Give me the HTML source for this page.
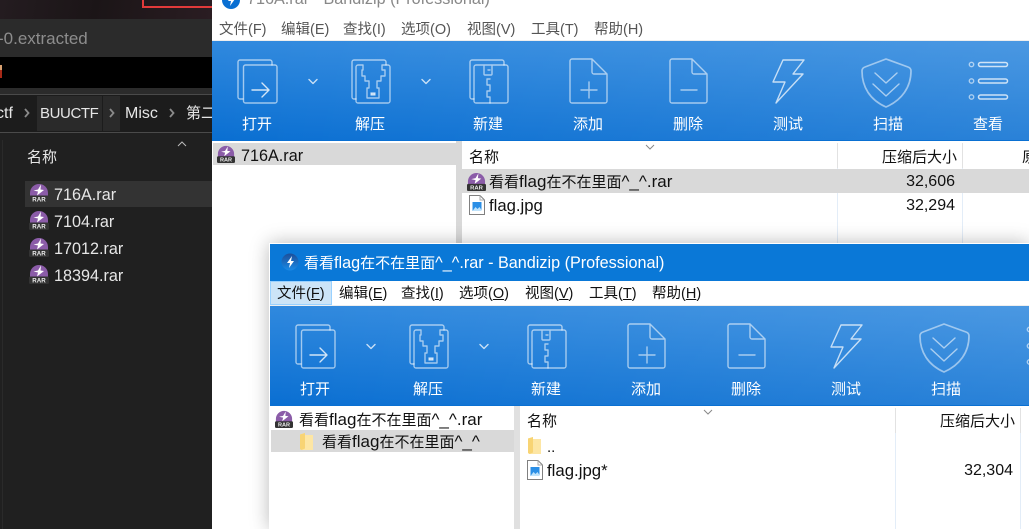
<!DOCTYPE html>
<html lang="zh"><head><meta charset="utf-8"><title>Bandizip</title>
<style>
html,body{margin:0;padding:0;width:1029px;height:529px;overflow:hidden;background:#202020}
body{position:relative;font-family:"Liberation Sans","Noto Sans CJK SC",sans-serif;font-size:15px;color:#111}
.b{position:absolute;display:block}
.c{position:absolute;overflow:hidden}
.t{position:absolute;white-space:nowrap;line-height:20px;height:20px}
.d{color:#e6e6e6}
.m{font-size:14.500px;color:#555}
.f{font-size:14.500px;color:#111}
.w{color:#fff;width:60px;text-align:center}
.r{text-align:right}
.n{font-size:16px}
.l{font-size:16.200px}
.x{font-size:17px}
u{text-underline-offset:1px}
svg{position:absolute;overflow:visible}
.tb{background:linear-gradient(90deg,rgba(255,255,255,0),rgba(255,255,255,.13)),linear-gradient(180deg,#3089de,#0a6fd2)}
</style></head><body>
<svg width="0" height="0" style="position:absolute">
<defs>
<symbol id="rar" viewBox="0 0 20 20" overflow="visible">
<path d="M1 14V10a9 9 0 0 1 18 0v4z" fill="#8b5ca8"/>
<path d="M12 1.500L9 6.500 4.500 7.500l4.500 1-1 4 7-5.500-3.500-.5z" fill="#fff"/>
<rect x="0" y="12.500" width="20" height="7.500" rx="1.500" fill="#333"/>
<text x="10" y="18.600" font-size="6.200" font-weight="700" fill="#eee" text-anchor="middle" font-family="Liberation Sans">RAR</text>
</symbol>
<symbol id="jpg" viewBox="0 0 16 20" overflow="visible">
<path d="M.5.5H11L15.500 5V19.500H.5z" fill="#fff" stroke="#808080"/>
<path d="M11 .5V5h4.500" fill="none" stroke="#aaa"/>
<rect x="3.500" y="7" width="9" height="9" fill="#2b8fe6"/>
<path d="M3.500 16l3-4 2 2 2-2 2 3v1z" fill="#bfe3fb"/>
</symbol>
<symbol id="fld" viewBox="0 0 13 17" overflow="visible">
<path d="M0 1.500L5 0v2h8v15H1.500L0 16z" fill="#fde6a4"/>
<path d="M0 1.500L5 0v15.500L1.500 17 0 16z" fill="#f8d474"/>
</symbol>
<symbol id="tools" viewBox="212 41 817 99" overflow="visible">
<g fill="none" stroke="#fff" stroke-opacity=".58" stroke-width="1.400" stroke-linejoin="round" stroke-linecap="round">
<path d="M243 99H240a2 2 0 0 1-2-2V62a2 2 0 0 1 2-2h30a2 2 0 0 1 2 2v3"/>
<rect x="243.500" y="65" width="33.500" height="38" rx="2"/>
<path d="M252 90H268M262 83l7 7-7 7" stroke-opacity=".8"/>
<path d="M309 79.500l4 4 4-4M422 79.500l4 4 4-4" stroke-opacity=".75"/>
<path d="M356 99H354a2 2 0 0 1-2-2V62a2 2 0 0 1 2-2h30a2 2 0 0 1 2 2v3"/>
<path d="M363 65H358a2 2 0 0 0-2 2V101a2 2 0 0 0 2 2H388a2 2 0 0 0 2-2V67a2 2 0 0 0-2-2H382V70H385V76H381V81H377V88H379V98H367V88H369V81H365V76H362V70H363z"/>
<rect x="371" y="93" width="4" height="2" fill="#fff" fill-opacity=".6"/>
<path d="M474 99H472a2 2 0 0 1-2-2V62a2 2 0 0 1 2-2h30a2 2 0 0 1 2 2v3"/>
<path d="M484 65H476a2 2 0 0 0-2 2V101a2 2 0 0 0 2 2H506a2 2 0 0 0 2-2V67a2 2 0 0 0-2-2H484zM484 65V74a1 1 0 0 0 1 1H491a1 1 0 0 0 1-1V65"/>
<path d="M488 70h2M490 79H487V85H490V91H487V97H490V103"/>
<path d="M572 59H592L607 74V101a2 2 0 0 1-2 2H572a2 2 0 0 1-2-2V61a2 2 0 0 1 2-2zM592 59V72a2 2 0 0 0 2 2H607"/>
<path d="M581 90H597M589 82V98"/>
<path d="M672 59H692L707 74V101a2 2 0 0 1-2 2H672a2 2 0 0 1-2-2V61a2 2 0 0 1 2-2zM692 59V72a2 2 0 0 0 2 2H707"/>
<path d="M681 90H697"/>
<path d="M783 60H804L793 74H803L776 103L785 82H773z" stroke-opacity=".72"/>
<path d="M886 59L908 67Q911 68 911 71C911 87 902 100 886 107C870 100 862 87 862 71Q862 68 865 67z" stroke-width="1.700" stroke-opacity=".5"/>
<path d="M875 73L886 83L897 73M873 84L886 96L899 84"/>
<circle cx="971.500" cy="64.500" r="2.200"/><circle cx="971.500" cy="81" r="2.200"/><circle cx="971.500" cy="97" r="2.200"/>
<rect x="978.500" y="62.500" width="29" height="4" rx="2" stroke-width="1.500" stroke-opacity=".75"/>
<rect x="978.500" y="79" width="29" height="4" rx="2" stroke-width="1.500" stroke-opacity=".75"/>
<rect x="978.500" y="95" width="29" height="4" rx="2" stroke-width="1.500" stroke-opacity=".75"/>
</g>
</symbol>
</defs>
</svg>

<!-- dark explorer -->
<div class="b" style="left:0;top:0;width:212px;height:19px;background:linear-gradient(100deg,#241c20,#1b1517 45%,#2a1d22)"></div>
<div class="c" style="left:142px;top:0;width:70px;height:9px"><div class="b" style="left:0;top:-4px;width:74px;height:8px;border:2px solid #e23a3a"></div></div>
<div class="b" style="left:0;top:19px;width:212px;height:38px;background:#2b2b2b"></div>
<div class="c" style="left:0;top:19px;width:212px;height:38px"><div class="t" style="left:-2px;top:10px;color:#8d8d8d;font-size:17px">-0.extracted</div></div>
<div class="b" style="left:0;top:57px;width:212px;height:31px;background:#000"></div>
<div class="b" style="left:0;top:65px;width:2px;height:5px;background:#d8a070"></div>
<div class="b" style="left:0;top:70px;width:2px;height:8px;background:#a82a18"></div>
<div class="b" style="left:0;top:88px;width:212px;height:6px;background:#2b2b2b"></div>
<div class="b" style="left:0;top:94px;width:212px;height:1px;background:#4a4a4a"></div>
<div class="b" style="left:0;top:95px;width:212px;height:37px;background:#1c1c1c"></div>
<div class="b" style="left:37px;top:96px;width:65px;height:35px;background:#2a2a2a"></div>
<div class="b" style="left:103px;top:96px;width:17px;height:35px;background:#2a2a2a"></div>
<div class="b" style="left:0;top:132px;width:212px;height:1px;background:#4a4a4a"></div>
<div class="c" style="left:0;top:95px;width:36px;height:37px"><div class="t d" style="left:-4px;top:9px;font-size:16px">ctf</div></div>
<div class="t d" style="left:40px;top:104px;font-size:15px;letter-spacing:-.4px">BUUCTF</div>
<div class="t d" style="left:125px;top:104px;font-size:16px">Misc</div>
<div class="t d" style="left:186px;top:104px;font-size:15px">第二</div>
<svg style="left:0;top:0" width="212" height="160"><g fill="none" stroke="#8a8a8a" stroke-width="1.800"><path d="M25 109l3.500 4-3.500 4M110 109l3.500 4-3.500 4M170 109l3.500 4-3.500 4"/><path d="M178 146l4-4 4 4" stroke="#bbb" stroke-width="1"/></g></svg>
<div class="b" style="left:2px;top:140px;width:1px;height:389px;background:#2a2a2a"></div>
<div class="t d" style="left:27px;top:148px">名称</div>
<div class="b" style="left:25px;top:181px;width:187px;height:26px;background:#333"></div>
<svg class="b" style="left:29px;top:183px" width="20" height="20"><use href="#rar"/></svg>
<svg class="b" style="left:29px;top:210px" width="20" height="20"><use href="#rar"/></svg>
<svg class="b" style="left:29px;top:237px" width="20" height="20"><use href="#rar"/></svg>
<svg class="b" style="left:29px;top:264px" width="20" height="20"><use href="#rar"/></svg>
<div class="t d" style="left:54px;top:185px;font-size:16.200px">716A.rar</div>
<div class="t d" style="left:54px;top:212px;font-size:16.200px">7104.rar</div>
<div class="t d" style="left:54px;top:239px;font-size:16.200px">17012.rar</div>
<div class="t d" style="left:54px;top:266px;font-size:16.200px">18394.rar</div>

<!-- back window -->
<div class="b" style="left:212px;top:0;width:817px;height:529px;background:#fff"></div>
<div class="c" style="left:212px;top:0;width:400px;height:12px">
<svg style="left:10px;top:-9px" width="18" height="18"><circle cx="9" cy="9" r="9" fill="#0a6fd2"/><path d="M11 3L6 10h3l-1 5 5-7h-3z" fill="#fff"/></svg>
<div class="t l" style="left:35px;top:-11px;color:#888">716A.rar - Bandizip (Professional)</div>
</div>
<div class="t m" style="left:219px;top:20px">文件(F)</div>
<div class="t m" style="left:281px;top:20px">编辑(E)</div>
<div class="t m" style="left:343px;top:20px">查找(I)</div>
<div class="t m" style="left:401px;top:20px">选项(O)</div>
<div class="t m" style="left:467px;top:20px">视图(V)</div>
<div class="t m" style="left:531px;top:20px">工具(T)</div>
<div class="t m" style="left:594px;top:20px">帮助(H)</div>
<div class="b" style="left:212px;top:40px;width:817px;height:1px;background:#eee"></div>
<div class="b tb" style="left:212px;top:41px;width:817px;height:99px"></div>
<div class="c" style="left:212px;top:41px;width:817px;height:99px"><svg style="left:0;top:0" width="817" height="99"><use href="#tools" width="817" height="99"/></svg></div>
<div class="t w" style="left:227px;top:115px">打开</div>
<div class="t w" style="left:340px;top:115px">解压</div>
<div class="t w" style="left:458px;top:115px">新建</div>
<div class="t w" style="left:558px;top:115px">添加</div>
<div class="t w" style="left:658px;top:115px">删除</div>
<div class="t w" style="left:758px;top:115px">测试</div>
<div class="t w" style="left:858px;top:115px">扫描</div>
<div class="t w" style="left:958px;top:115px">查看</div>
<div class="b" style="left:212px;top:140px;width:817px;height:1px;background:#0a70d2"></div>
<div class="b" style="left:213px;top:143px;width:243px;height:22px;background:#d9d9d9"></div>
<svg class="b" style="left:217px;top:145px" width="18" height="18"><use href="#rar"/></svg>
<div class="t" style="left:241px;top:146px;font-size:16.200px">716A.rar</div>
<div class="b" style="left:456px;top:141px;width:6px;height:388px;background:#d9d9d9"></div>
<div class="t" style="left:469px;top:148px">名称</div>
<svg style="left:645px;top:144px" width="10" height="6"><path d="M1 1l4 4 4-4" fill="none" stroke="#888"/></svg>
<div class="b" style="left:837px;top:143px;width:1px;height:25px;background:#e2e2e2"></div>
<div class="b" style="left:962px;top:143px;width:1px;height:25px;background:#e2e2e2"></div>
<div class="b" style="left:837px;top:168px;width:1px;height:100px;background:#e3edf8"></div>
<div class="b" style="left:962px;top:168px;width:1px;height:100px;background:#e3edf8"></div>
<div class="t r" style="left:857px;width:100px;top:148px">压缩后大小</div>
<div class="c" style="left:1022px;top:148px;width:7px;height:20px"><div class="t" style="left:0;top:0">原始大小</div></div>
<div class="b" style="left:462px;top:169px;width:567px;height:24px;background:#d9d9d9"></div>
<svg class="b" style="left:467px;top:172px" width="19" height="19"><use href="#rar"/></svg>
<div class="t" style="left:489px;top:172px">看看<span class="x">flag</span>在不在里面<span class="x">^_^.rar</span></div>
<svg class="b" style="left:469px;top:195px" width="16" height="20"><use href="#jpg"/></svg>
<div class="t" style="left:489px;top:196px;font-size:16.700px">flag.jpg</div>
<div class="t r n" style="left:855px;width:100px;top:172px">32,606</div>
<div class="t r n" style="left:855px;width:100px;top:196px">32,294</div>

<!-- front window -->
<div class="b" style="left:269px;top:243px;width:760px;height:286px;background:#fff;box-shadow:0 0 18px rgba(0,0,0,.28)"></div>
<div class="b" style="left:270px;top:244px;width:759px;height:37px;background:#0a78d7"></div>
<svg style="left:281px;top:253px" width="18" height="18"><defs><linearGradient id="g" x1="0" y1="0" x2="0" y2="1"><stop offset="0" stop-color="#1c4f9a"/><stop offset="1" stop-color="#1a8ae6"/></linearGradient></defs><circle cx="9" cy="9" r="8.500" fill="url(#g)"/><path d="M11 3L6 10h3l-1 5 5-7h-3z" fill="#fff"/></svg>
<div class="t" style="left:304px;top:253px;color:#fff">看看<span class="l">flag</span>在不在里面<span class="l">^_^.rar - Bandizip (Professional)</span></div>
<div class="b" style="left:270px;top:281px;width:62px;height:24px;box-sizing:border-box;background:#cce4f7;border:1px solid #99d1ff"></div>
<div class="t f" style="left:277px;top:284px">文件(<u>F</u>)</div>
<div class="t f" style="left:339px;top:284px">编辑(<u>E</u>)</div>
<div class="t f" style="left:401px;top:284px">查找(<u>I</u>)</div>
<div class="t f" style="left:459px;top:284px">选项(<u>O</u>)</div>
<div class="t f" style="left:525px;top:284px">视图(<u>V</u>)</div>
<div class="t f" style="left:589px;top:284px">工具(<u>T</u>)</div>
<div class="t f" style="left:652px;top:284px">帮助(<u>H</u>)</div>
<div class="b" style="left:270px;top:305px;width:759px;height:1px;background:#eee"></div>
<div class="b tb" style="left:270px;top:306px;width:759px;height:99px"></div>
<div class="c" style="left:270px;top:306px;width:759px;height:99px"><svg style="left:0;top:0" width="817" height="99"><use href="#tools" width="817" height="99"/></svg></div>
<div class="t w" style="left:285px;top:380px">打开</div>
<div class="t w" style="left:398px;top:380px">解压</div>
<div class="t w" style="left:516px;top:380px">新建</div>
<div class="t w" style="left:616px;top:380px">添加</div>
<div class="t w" style="left:716px;top:380px">删除</div>
<div class="t w" style="left:816px;top:380px">测试</div>
<div class="t w" style="left:916px;top:380px">扫描</div>
<div class="b" style="left:270px;top:405px;width:759px;height:1px;background:#0a70d2"></div>
<svg class="b" style="left:275px;top:410px" width="18" height="18"><use href="#rar"/></svg>
<div class="t" style="left:299px;top:410px">看看<span class="x">flag</span>在不在里面<span class="x">^_^.rar</span></div>
<div class="b" style="left:271px;top:430px;width:243px;height:22px;background:#d9d9d9"></div>
<svg class="b" style="left:300px;top:433px" width="13" height="17"><use href="#fld"/></svg>
<div class="t" style="left:322px;top:432px">看看<span class="x">flag</span>在不在里面<span class="x">^_^</span></div>
<div class="b" style="left:514px;top:406px;width:6px;height:123px;background:#e0e0e0"></div>
<div class="t" style="left:527px;top:412px">名称</div>
<svg style="left:703px;top:409px" width="10" height="6"><path d="M1 1l4 4 4-4" fill="none" stroke="#888"/></svg>
<div class="b" style="left:895px;top:408px;width:1px;height:25px;background:#e2e2e2"></div>
<div class="b" style="left:1020px;top:408px;width:1px;height:25px;background:#e2e2e2"></div>
<div class="b" style="left:895px;top:433px;width:1px;height:96px;background:#e3edf8"></div>
<div class="b" style="left:1020px;top:433px;width:1px;height:96px;background:#e3edf8"></div>
<div class="t r" style="left:915px;width:100px;top:412px">压缩后大小</div>
<svg class="b" style="left:528px;top:437px" width="13" height="17"><use href="#fld"/></svg>
<div class="t" style="left:547px;top:438px">..</div>
<svg class="b" style="left:527px;top:460px" width="16" height="20"><use href="#jpg"/></svg>
<div class="t" style="left:547px;top:461px;font-size:16.800px">flag.jpg*</div>
<div class="t r n" style="left:913px;width:100px;top:461px">32,304</div>
</body></html>
